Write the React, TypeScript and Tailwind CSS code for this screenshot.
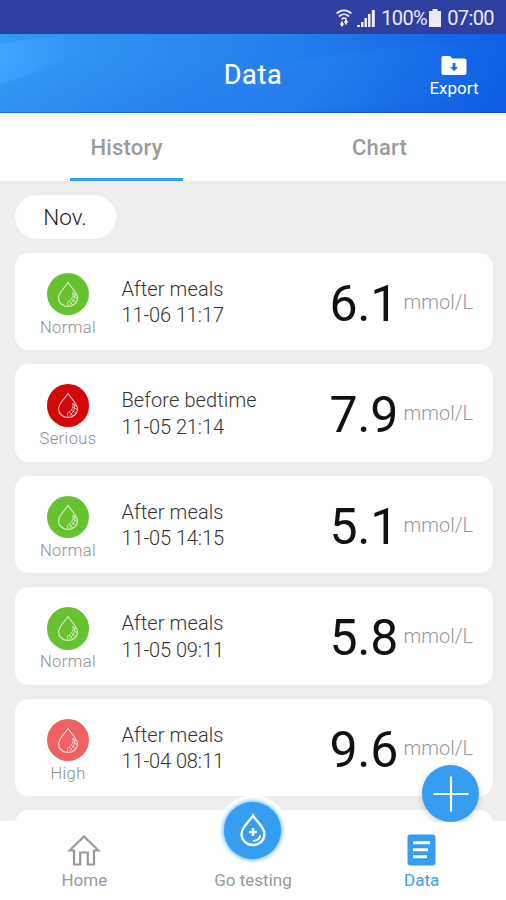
type Level = "Normal" | "Serious" | "High";

interface Reading {
  level: Level;
  label: string;
  time: string;
  value: string;
}

const readings: Reading[] = [
  { level: "Normal", label: "After meals", time: "11-06 11:17", value: "6.1" },
  { level: "Serious", label: "Before bedtime", time: "11-05 21:14", value: "7.9" },
  { level: "Normal", label: "After meals", time: "11-05 14:15", value: "5.1" },
  { level: "Normal", label: "After meals", time: "11-05 09:11", value: "5.8" },
  { level: "High", label: "After meals", time: "11-04 08:11", value: "9.6" },
];

const levelColors: Record<Level, string> = {
  Normal: "bg-[#67c130]",
  Serious: "bg-[#d20808]",
  High: "bg-[#ee6163]",
};

function DropIcon() {
  return (
    <svg width="22" height="27" viewBox="0 0 22 27" fill="none" stroke="white" strokeOpacity="0.7" strokeWidth="1.2">
      <path d="M11 1.500C8.500 6 1.500 11 1.500 17A9.500 8.500 0 0 0 11 25.500A9.500 8.500 0 0 0 20.500 17C20.500 11 13.500 6 11 1.500Z" />
      <path
        d="M15.800 11C16.500 16 15 18.500 10.500 21L10.800 25M17.500 12.500C18 18 16.500 20.500 12.500 23.500M15.800 11.500L19.500 14.500M16 15L20 17.500M14.500 18L18.500 21M12.500 20L15.500 24"
        strokeWidth="0.9"
      />
    </svg>
  );
}

function StatusBar() {
  return (
    <div className="flex h-[34px] shrink-0 items-center justify-end bg-[#303f9f] pt-[2px] pr-[12px] text-[20px] leading-none text-white/90">
      <svg className="mr-[5px]" width="16" height="18" viewBox="0 0 16 18" fill="none" stroke="currentColor" strokeWidth="1.800">
        <path d="M.7 4.500C5 .4 11 .4 15.300 4.500M3 7.500C6 4.700 10 4.700 13 7.500M5.500 10.200C7 8.900 9 8.900 10.500 10.200" />
        <path d="M6 12.500V17M10 11V15.500" />
        <path d="M4.300 14.500L6 17L7.700 14.500M8.300 13.500L10 11L11.700 13.500" strokeWidth="1.200" />
      </svg>
      <svg className="mr-[6px]" width="18" height="19" viewBox="0 0 18 19" fill="currentColor">
        <path d="M0 16h3v2H0zM4 13h2.500v5H4zM7.500 9h2.500v9H7.500zM11 5h2.500v13H11zM14.800 1h3v17h-3z" />
      </svg>
      <span className="w-[48px] whitespace-nowrap tracking-[-0.6px]">100%</span>
      <svg className="mr-[6px]" width="12" height="18" viewBox="0 0 12 18" fill="currentColor">
        <path d="M3.500 0h5v2H12v16H0V2h3.500z" />
      </svg>
      <span className="tracking-[-0.6px]">07:00</span>
    </div>
  );
}

function Header() {
  return (
    <header className="relative flex h-[79px] shrink-0 items-center justify-center bg-linear-to-r from-[#319bf7] via-[#2583ee] to-[#1060e4] text-white">
      <svg className="absolute inset-0" width="506" height="79" viewBox="0 0 506 79" preserveAspectRatio="none">
        <defs>
          <linearGradient id="ray" x1="0" y1="0" x2="1" y2="0">
            <stop offset="0" stopColor="#42aaff" stopOpacity="0.7" />
            <stop offset="1" stopColor="#3297f7" stopOpacity="0" />
          </linearGradient>
          <linearGradient id="sweep" x1="0" y1="0" x2="1" y2="0">
            <stop offset="0" stopColor="#2482ed" stopOpacity="0" />
            <stop offset="0.45" stopColor="#3389f2" stopOpacity="0.4" />
            <stop offset="1" stopColor="#2474ec" stopOpacity="0" />
          </linearGradient>
          <linearGradient id="shade" x1="0.3" y1="0" x2="0.4" y2="1">
            <stop offset="0.3" stopColor="#073fd0" stopOpacity="0" />
            <stop offset="1" stopColor="#073fd0" stopOpacity="0.1" />
          </linearGradient>
        </defs>
        <path d="M0 10Q55 0 107 0Q60 32 0 50Z" fill="url(#ray)" />
        <path d="M130 59Q230 43 300 27Q380 10 506 8V60Q370 76 250 79H60Z" fill="url(#sweep)" />
        <path d="M0 0H506V79H0Z" fill="url(#shade)" />
        <path d="M0 78.500H506" stroke="#0838b8" strokeOpacity="0.4" />
      </svg>
      <h1 className="relative pt-[3px] text-[27px] leading-8 tracking-[0.7px] [-webkit-text-stroke:0.2px_white]">Data</h1>
      <button className="absolute top-[22px] right-[27px] flex w-[50px] flex-col items-center">
        <svg width="26" height="19" viewBox="0 0 26 19">
          <path d="M2 0H9L11.500 2.500H23.500Q25.500 2.500 25.500 4.500V17Q25.500 19 23.500 19H2Q.5 19 .5 17V2Q.5 0 2 0Z" fill="white" />
          <path d="M11.700 7h2.800v4h2.500l-3.900 4.300L9.200 11h2.500z" fill="#176ae5" />
        </svg>
        <span className="mt-[2px] text-[17px] leading-[22px]">Export</span>
      </button>
    </header>
  );
}

function Tabs() {
  return (
    <div className="grid h-[68px] shrink-0 grid-cols-2 bg-white text-[22px] font-medium tracking-[0.2px] text-[#9b9b9b]">
      <button className="flex justify-center">
        <span className="flex h-[68px] w-[113px] items-center justify-center border-b-[3px] border-[#339fe4] pt-[4px]">
          History
        </span>
      </button>
      <button className="flex h-[68px] items-center justify-center pt-px">Chart</button>
    </div>
  );
}

function ReadingCard({ reading }: { reading: Reading }) {
  return (
    <li className="flex h-[97.5px] shrink-0 rounded-[14px] bg-white">
      <div className="flex w-[107px] shrink-0 flex-col items-center pt-[20px] text-[16.500px] leading-[20px] font-light text-[#8f8f8f]">
        <span className={`flex size-[42.500px] items-center justify-center rounded-full ${levelColors[reading.level]}`}>
          <DropIcon />
        </span>
        <span className="mt-[2.500px] tracking-[0.4px]">{reading.level}</span>
      </div>
      <div className="w-[208px] pt-[23px] text-[20px] leading-[26.500px] font-light text-[#333]">
        <p className="tracking-[0.1px]">{reading.label}</p>
        <p className="tracking-[-0.1px]">{reading.time}</p>
      </div>
      <span className="w-[74px] pt-[21px] text-[50px] leading-[60px] tracking-[-0.3px] text-[#111]">{reading.value}</span>
      <span className="pt-[37px] text-[20px] leading-6 font-light text-[#999]">mmol/L</span>
    </li>
  );
}

function BottomNav() {
  return (
    <nav className="relative grid h-[79px] shrink-0 grid-cols-3 bg-white text-[17px] text-[#999]">
      <button className="flex flex-col items-center pt-[13px]">
        <svg width="34" height="33" viewBox="0 0 34 33" fill="none" stroke="#999" strokeWidth="2.200">
          <path d="M17 2.500L2.500 16.500H7V30.500H13.200V18.500H20.800V30.500H27V16.500H31.500Z" />
        </svg>
        <span className="mt-[2px] leading-[22px]">Home</span>
      </button>
      <button className="relative flex flex-col items-center">
        <span className="absolute -top-[26px] flex size-[70px] items-center justify-center rounded-full bg-white">
          <span className="flex size-[57px] items-center justify-center rounded-full bg-[#369ef0] shadow-[0_0_4px_1px_#5bb4fa]">
            <svg width="28" height="34" viewBox="0 0 28 34" fill="none" stroke="white" strokeWidth="2.400">
              <path d="M14 2.500C11 8 2.500 14 2.500 21A11.500 11 0 0 0 14 32A11.500 11 0 0 0 25.500 21C25.500 14 17 8 14 2.500Z" />
              <path d="M14 15V23M10 19H18" />
              <path d="M14 28Q20.500 27.500 21.500 22" strokeWidth="1.800" />
            </svg>
          </span>
        </span>
        <span className="mt-[48px] leading-[22px]">Go testing</span>
      </button>
      <button className="flex flex-col items-center pt-[13px] text-[#369ef0]">
        <svg width="29" height="32" viewBox="0 0 29 32">
          <rect x=".5" y=".5" width="28" height="31" rx="3" fill="#369ef0" />
          <path d="M6 8.800H23M6 15.800H21M6 22.800H20" stroke="white" strokeWidth="3" />
        </svg>
        <span className="mt-[3px] leading-[22px]">Data</span>
      </button>
      <button className="absolute -top-[56px] right-[27px] z-10 flex size-[57px] items-center justify-center rounded-full bg-[#369ef0] shadow-[0_2px_6px_rgba(0,0,0,0.2)] [clip-path:inset(-10px_-10px_0_-10px)]">
        <svg width="36" height="36" viewBox="0 0 36 36" stroke="white" strokeWidth="2.200">
          <path d="M18 .5V35.500M.5 18H35.500" />
        </svg>
      </button>
    </nav>
  );
}

export default function App() {
  return (
    <div className="flex h-[900px] w-[506px] flex-col overflow-hidden bg-[#eee] font-[Roboto,sans-serif]">
      <StatusBar />
      <Header />
      <Tabs />
      <main className="min-h-0 flex-1 overflow-hidden pt-[14px] pr-[13.500px] pl-[14.500px]">
        <div className="flex h-[44px] w-[101px] items-center justify-center rounded-full bg-white pt-[2px] text-[22.500px] font-light text-[#222]">
          Nov.
        </div>
        <ul className="mt-[13.800px] flex flex-col gap-[14px]">
          {readings.map((reading) => (
            <ReadingCard key={reading.time} reading={reading} />
          ))}
          <li className="h-[97.500px] shrink-0 rounded-[14px] bg-white" />
        </ul>
      </main>
      <BottomNav />
    </div>
  );
}
